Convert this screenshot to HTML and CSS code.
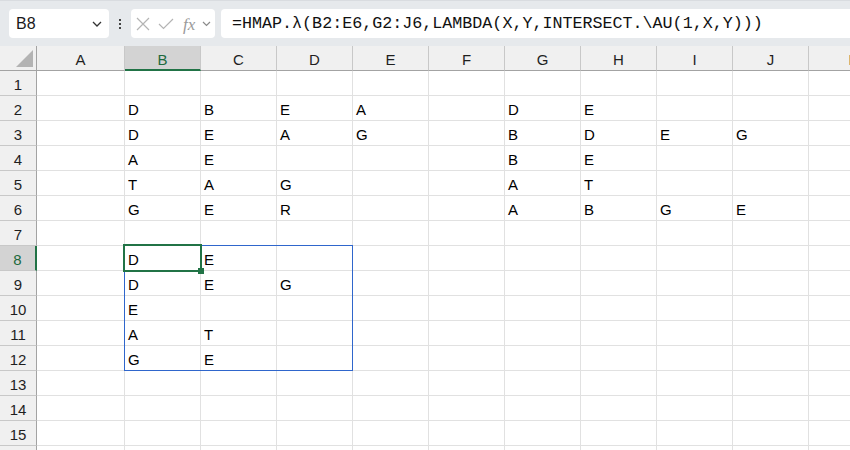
FILE: index.html
```html
<!DOCTYPE html>
<html>
<head>
<meta charset="utf-8">
<link rel="stylesheet" href="styles.css">
</head>
<body>
<div class="toolbar">
  <div class="namebox"><span>B8</span>
    <svg class="chev" width="10" height="6" viewBox="0 0 10 6"><path d="M1 1 L5 5 L9 1" fill="none" stroke="#333" stroke-width="1.3"/></svg>
  </div>
  <div class="dots"><i></i><i></i><i></i></div>
  <div class="fxbox">
    <svg width="84" height="29" viewBox="0 0 84 29">
      <path d="M6 9 L18 21 M18 9 L6 21" stroke="#b4b4b4" stroke-width="1.2" fill="none"/>
      <path d="M28 15 L32.5 19.5 L42 10" stroke="#b4b4b4" stroke-width="1.2" fill="none"/>
      <text x="52" y="21" class="fx">fx</text>
      <path d="M72 13 L75.5 16.5 L79 13" stroke="#8a8a8a" stroke-width="1.2" fill="none"/>
    </svg>
  </div>
  <div class="formula">=HMAP.λ(B2:E6,G2:J6,LAMBDA(X,Y,INTERSECT.\AU(1,X,Y)))</div>
</div>
<div class="grid">
  <div class="corner"><svg width="36" height="24" viewBox="0 0 36 24"><polygon points="16,21 33,21 33,4" fill="#b3b3b3"/></svg></div>
  <div class="h">A</div><div class="h sel">B</div><div class="h">C</div><div class="h">D</div><div class="h">E</div><div class="h">F</div><div class="h">G</div><div class="h">H</div><div class="h">I</div><div class="h">J</div><div class="h">K</div>

  <div class="rh">1</div><div class="c"></div><div class="c"></div><div class="c"></div><div class="c"></div><div class="c"></div><div class="c"></div><div class="c"></div><div class="c"></div><div class="c"></div><div class="c"></div><div class="c"></div>
  <div class="rh">2</div><div class="c"></div><div class="c">D</div><div class="c">B</div><div class="c">E</div><div class="c">A</div><div class="c"></div><div class="c">D</div><div class="c">E</div><div class="c"></div><div class="c"></div><div class="c"></div>
  <div class="rh">3</div><div class="c"></div><div class="c">D</div><div class="c">E</div><div class="c">A</div><div class="c">G</div><div class="c"></div><div class="c">B</div><div class="c">D</div><div class="c">E</div><div class="c">G</div><div class="c"></div>
  <div class="rh">4</div><div class="c"></div><div class="c">A</div><div class="c">E</div><div class="c"></div><div class="c"></div><div class="c"></div><div class="c">B</div><div class="c">E</div><div class="c"></div><div class="c"></div><div class="c"></div>
  <div class="rh">5</div><div class="c"></div><div class="c">T</div><div class="c">A</div><div class="c">G</div><div class="c"></div><div class="c"></div><div class="c">A</div><div class="c">T</div><div class="c"></div><div class="c"></div><div class="c"></div>
  <div class="rh">6</div><div class="c"></div><div class="c">G</div><div class="c">E</div><div class="c">R</div><div class="c"></div><div class="c"></div><div class="c">A</div><div class="c">B</div><div class="c">G</div><div class="c">E</div><div class="c"></div>
  <div class="rh">7</div><div class="c"></div><div class="c"></div><div class="c"></div><div class="c"></div><div class="c"></div><div class="c"></div><div class="c"></div><div class="c"></div><div class="c"></div><div class="c"></div><div class="c"></div>
  <div class="rh sel">8</div><div class="c"></div><div class="c">D</div><div class="c">E</div><div class="c"></div><div class="c"></div><div class="c"></div><div class="c"></div><div class="c"></div><div class="c"></div><div class="c"></div><div class="c"></div>
  <div class="rh">9</div><div class="c"></div><div class="c">D</div><div class="c">E</div><div class="c">G</div><div class="c"></div><div class="c"></div><div class="c"></div><div class="c"></div><div class="c"></div><div class="c"></div><div class="c"></div>
  <div class="rh">10</div><div class="c"></div><div class="c">E</div><div class="c"></div><div class="c"></div><div class="c"></div><div class="c"></div><div class="c"></div><div class="c"></div><div class="c"></div><div class="c"></div><div class="c"></div>
  <div class="rh">11</div><div class="c"></div><div class="c">A</div><div class="c">T</div><div class="c"></div><div class="c"></div><div class="c"></div><div class="c"></div><div class="c"></div><div class="c"></div><div class="c"></div><div class="c"></div>
  <div class="rh">12</div><div class="c"></div><div class="c">G</div><div class="c">E</div><div class="c"></div><div class="c"></div><div class="c"></div><div class="c"></div><div class="c"></div><div class="c"></div><div class="c"></div><div class="c"></div>
  <div class="rh">13</div><div class="c"></div><div class="c"></div><div class="c"></div><div class="c"></div><div class="c"></div><div class="c"></div><div class="c"></div><div class="c"></div><div class="c"></div><div class="c"></div><div class="c"></div>
  <div class="rh">14</div><div class="c"></div><div class="c"></div><div class="c"></div><div class="c"></div><div class="c"></div><div class="c"></div><div class="c"></div><div class="c"></div><div class="c"></div><div class="c"></div><div class="c"></div>
  <div class="rh">15</div><div class="c"></div><div class="c"></div><div class="c"></div><div class="c"></div><div class="c"></div><div class="c"></div><div class="c"></div><div class="c"></div><div class="c"></div><div class="c"></div><div class="c"></div>
  <div class="rh"></div><div class="c"></div><div class="c"></div><div class="c"></div><div class="c"></div><div class="c"></div><div class="c"></div><div class="c"></div><div class="c"></div><div class="c"></div><div class="c"></div><div class="c"></div>

  <div class="range"></div>
  <div class="active"></div>
  <div class="handle"></div>
</div>
</body>
</html>
```
FILE: styles.css
```css
html, body {
  margin: 0;
  padding: 0;
}
body {
  width: 850px;
  height: 450px;
  overflow: hidden;
  background: #fff;
  font-family: "Liberation Sans", Arial, sans-serif;
  color: #000;
}
.toolbar {
  height: 46px;
  box-sizing: border-box;
  background: #e6e9ec;
  border-top: 1px solid #d9dce0;
  display: flex;
  align-items: flex-start;
  padding: 8px 0 0 9px;
}
.namebox {
  width: 100px;
  height: 29px;
  box-sizing: border-box;
  background: #fff;
  border-radius: 4px;
  display: flex;
  align-items: center;
  justify-content: space-between;
  padding: 0 7px 0 7px;
  font-size: 16px;
  color: #1a1a1a;
}
.dots {
  width: 22px;
  height: 29px;
  display: flex;
  flex-direction: column;
  align-items: center;
  justify-content: center;
  gap: 2px;
}
.dots i {
  display: block;
  width: 2px;
  height: 2px;
  background: #444;
}
.fxbox {
  width: 84px;
  height: 29px;
  background: #fff;
  border-radius: 4px;
  margin-right: 6px;
}
.fxbox svg {
  display: block;
}
.fx {
  font-family: "Liberation Serif", "DejaVu Serif", serif;
  font-style: italic;
  font-size: 17px;
  fill: #9a9a9a;
}
.formula {
  flex: 1;
  height: 29px;
  background: #fff;
  border-radius: 4px 0 0 4px;
  padding-left: 11px;
  font-family: "Liberation Mono", "DejaVu Sans Mono", monospace;
  font-size: 16.7px;
  line-height: 29px;
  color: #111;
  white-space: nowrap;
  overflow: hidden;
}
.grid {
  position: relative;
  display: grid;
  grid-template-columns: 37px 88px repeat(9, 76px) 90px;
  grid-auto-rows: 25px;
  font-size: 15px;
}
.grid > div {
  box-sizing: border-box;
  line-height: 20px;
  padding-top: 4px;
  white-space: nowrap;
}
.grid > .corner {
  padding: 0;
  background: #f0f0f0;
  border-right: 1px solid #a3a3a3;
  border-bottom: 1px solid #a3a3a3;
}
.corner svg {
  display: block;
}
.h {
  background: #f0f0f0;
  border-right: 1px solid #c8c8c8;
  border-bottom: 1px solid #a3a3a3;
  text-align: center;
  color: #1f1f1f;
}
.h.sel {
  background: #d3d3d3;
  border-bottom: 2px solid #217346;
  color: #1d6a3e;
}
.rh {
  background: #f0f0f0;
  border-right: 1px solid #a3a3a3;
  border-bottom: 1px solid #c8c8c8;
  text-align: center;
  color: #1f1f1f;
}
.rh.sel {
  background: #d3d3d3;
  border-right: 2px solid #217346;
  color: #1d6a3e;
}
.grid > .c {
  border-right: 1px solid #e1e1e1;
  border-bottom: 1px solid #e1e1e1;
  padding-left: 3px;
}
.grid > .range {
  position: absolute;
  left: 124px;
  top: 199px;
  width: 229px;
  height: 126px;
  border: 1px solid #2f66cc;
  padding: 0;
}
.grid > .active {
  position: absolute;
  left: 123px;
  top: 198px;
  width: 79px;
  height: 28px;
  border: 2px solid #217346;
  padding: 0;
}
.grid > .handle {
  position: absolute;
  left: 198px;
  top: 222px;
  width: 6px;
  height: 6px;
  background: #217346;
  padding: 0;
}
```
